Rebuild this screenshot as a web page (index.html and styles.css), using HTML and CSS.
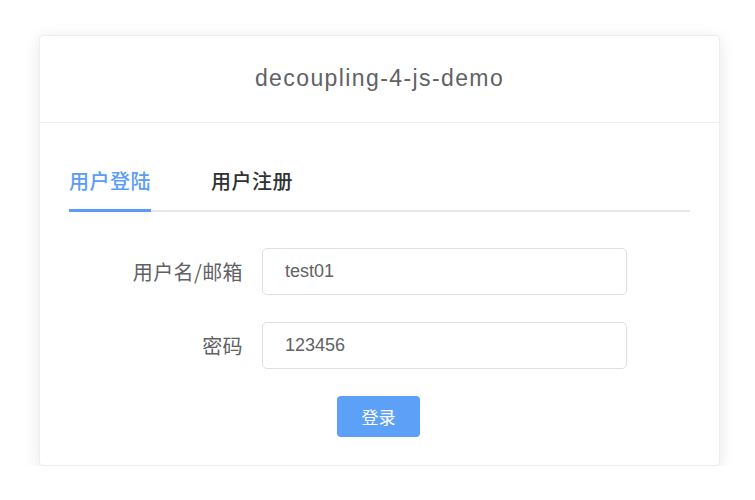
FILE: index.html
```html
<!DOCTYPE html>
<html lang="zh-CN">
<head>
<meta charset="utf-8">
<title>decoupling-4-js-demo</title>
<link rel="stylesheet" href="styles.css">
</head>
<body>
<div class="card">
  <div class="card-header">decoupling-4-js-demo</div>
  <div class="card-body">
    <div class="tabs">
      <div class="tab active">用户登陆</div>
      <div class="tab">用户注册</div>
    </div>
    <form class="form">
      <div class="form-item">
        <label class="label">用户名/邮箱</label>
        <input class="input" type="text" value="test01">
      </div>
      <div class="form-item">
        <label class="label">密码</label>
        <input class="input" type="text" value="123456">
      </div>
      <div class="actions">
        <button type="button" class="btn">登录</button>
      </div>
    </form>
  </div>
</div>
</body>
</html>
```

FILE: styles.css
```css
* { box-sizing: border-box; }
html, body { margin: 0; padding: 0; background: #fff; }
body {
  font-family: "Liberation Sans", Arial, "Noto Sans CJK SC", sans-serif;
  color: #606266;
  padding: 35px 0 0 39px;
}
.card {
  width: 681px;
  height: 431px;
  border: 1px solid #ebeef5;
  border-radius: 4px;
  background: #fff;
  box-shadow: 0 3px 16px 0 rgba(0,0,0,0.1);
  overflow: hidden;
}
.card-header {
  height: 87px;
  border-bottom: 1px solid #ebeef5;
  display: flex;
  align-items: center;
  justify-content: center;
  font-size: 23px;
  letter-spacing: 1.4px;
  color: #606266;
  padding-bottom: 1px;
}
.card-body {
  padding: 29px 29px 0 29px;
}
.tabs {
  display: flex;
  gap: 60px;
  border-bottom: 2px solid #e4e7ed;
  height: 60px;
}
.tab {
  position: relative;
  font-family: "Noto Sans CJK SC", sans-serif;
  font-size: 20px;
  font-weight: 500;
  letter-spacing: 0.5px;
  color: #303133;
  line-height: 58px;
  height: 58px;
}
.tab.active { color: #5a9cf8; }
.tab.active::after {
  content: "";
  position: absolute;
  left: 0;
  right: 0;
  bottom: -2px;
  height: 3px;
  background: #5a9cf8;
}
.form {
  margin-top: 36px;
}
.form-item {
  display: flex;
  align-items: center;
  margin-bottom: 27px;
}
.label {
  width: 174px;
  margin-right: 19px;
  text-align: right;
  font-family: "Noto Sans CJK SC", sans-serif;
  font-size: 20px;
  letter-spacing: 0.4px;
  color: #606266;
}
.input {
  width: 365px;
  height: 47px;
  border: 1px solid #dcdfe6;
  border-radius: 5px;
  padding: 0 22px;
  font-family: "Liberation Sans", Arial, sans-serif;
  font-size: 18px;
  color: #606266;
  outline: none;
  background: #fff;
}
.actions {
  display: flex;
  justify-content: center;
  padding-right: 2px;
}
.btn {
  width: 83px;
  height: 41px;
  border: none;
  border-radius: 4px;
  background: #5ca0f8;
  color: #fff;
  font-family: "Noto Sans CJK SC", sans-serif;
  font-size: 17px;
  padding: 0;
}
```
